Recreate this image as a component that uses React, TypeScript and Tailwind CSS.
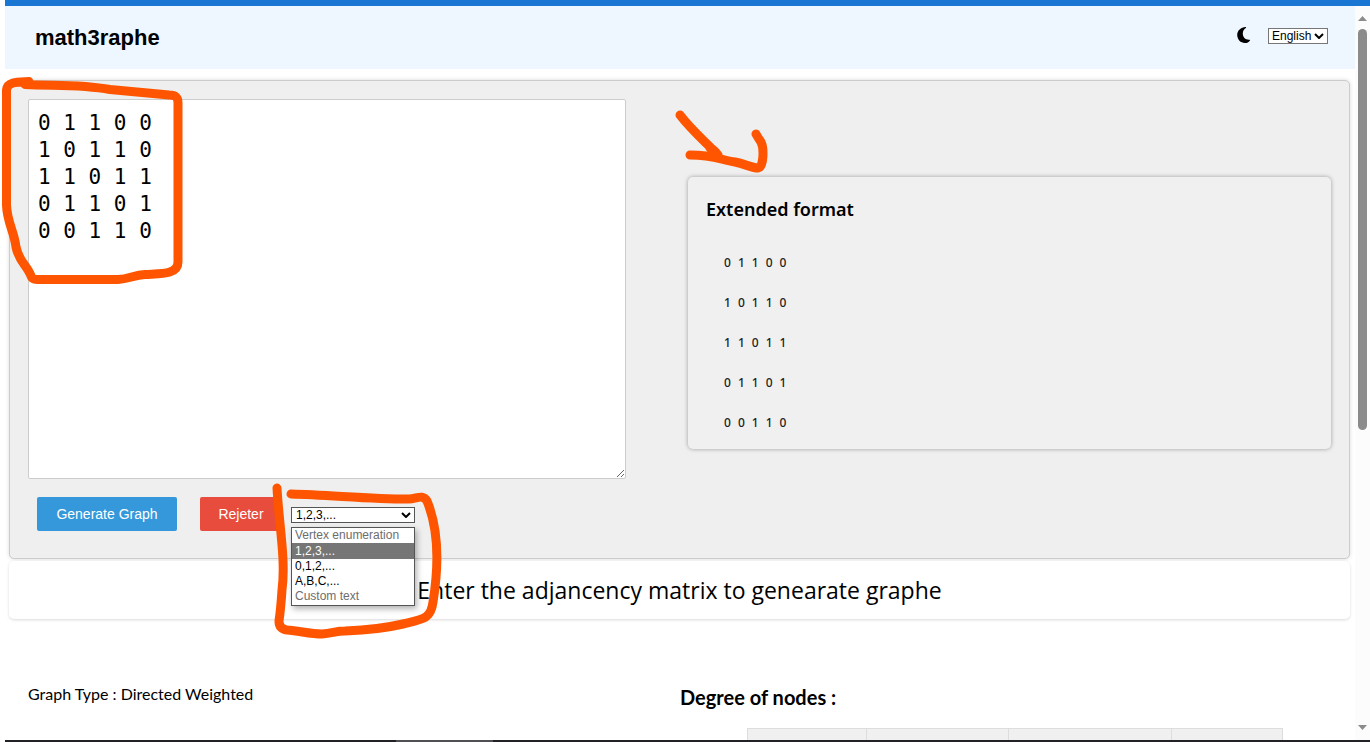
import { useState } from "react";

const MATRIX = ["0 1 1 0 0", "1 0 1 1 0", "1 1 0 1 1", "0 1 1 0 1", "0 0 1 1 0"];

const ENUMERATIONS = [
  { label: "Vertex enumeration", disabled: true },
  { label: "1,2,3,...", disabled: false },
  { label: "0,1,2,...", disabled: false },
  { label: "A,B,C,...", disabled: false },
  { label: "Custom text", disabled: true },
];

function Chevron() {
  return (
    <svg viewBox="0 0 10 6" className="pointer-events-none absolute right-1 top-[5px] h-[6px] w-[10px]" fill="none" stroke="#000" strokeWidth="2">
      <path d="M1 1l4 4 4-4" />
    </svg>
  );
}

function Header() {
  return (
    <header className="flex h-[63px] items-start justify-between bg-[#eef6ff] pl-[30px] pr-[27px]">
      <h1 className="mt-[18px] text-[22px] font-bold leading-7">math3raphe</h1>
      <div className="mt-[21px] flex items-start gap-4">
        <button type="button" aria-label="Dark mode" className="h-4 w-4">
          <svg viewBox="0 0 16 16" className="h-4 w-4">
            <path d="M9.600 0C4.900.2 1.200 3.600 1.200 8s3.500 8 7.600 8c2.300 0 4.200-.9 5.200-2.600.2-.4-.1-.7-.5-.6C9.600 13.200 6.800 10.300 6.800 6.600c0-2.300 1.200-4.400 3-5.500.6-.4.3-1.100-.2-1.100z" />
          </svg>
        </button>
        <div className="relative mt-px flex">
          <select aria-label="Language" className="h-4 w-[60px] appearance-none border border-[#767676] bg-white pl-[3px] text-xs leading-[14px]">
            <option>English</option>
          </select>
          <Chevron />
        </div>
      </div>
    </header>
  );
}

function EnumerationPicker() {
  const [selected, setSelected] = useState("1,2,3,...");
  return (
    <div className="relative w-[124px]">
      <div className="relative flex">
        <select
          aria-label="Vertex enumeration"
          value={selected}
          onChange={(e) => setSelected(e.target.value)}
          className="h-4 w-full appearance-none border border-[#555] bg-white pl-1 text-xs leading-[14px]"
        >
          {ENUMERATIONS.map((item) => (
            <option key={item.label} disabled={item.disabled}>{item.label}</option>
          ))}
        </select>
        <Chevron />
      </div>
      <ul role="listbox" aria-label="Vertex enumeration" className="absolute left-0 top-5 z-10 w-full border border-[#555] bg-white pb-px text-xs leading-[15px] shadow-[2px_3px_6px_rgba(0,0,0,0.3)]">
        {ENUMERATIONS.map((item) => (
          <li
            key={item.label}
            role="option"
            aria-selected={item.label === selected}
            onClick={() => !item.disabled && setSelected(item.label)}
            className={
              item.label === selected
                ? "bg-[#767676] pl-[3px] leading-4 text-white"
                : item.disabled
                  ? "pl-[3px] text-[#6d6d6d]"
                  : "pl-[3px] text-black"
            }
          >
            {item.label}
          </li>
        ))}
      </ul>
    </div>
  );
}

function Workspace() {
  return (
    <section className="ml-1 mr-[5px] mt-[11px] rounded-[5px] border border-[#ccc] bg-[#efefef] px-[18px] pb-[27px] pt-[18px] shadow-[0_0_4px_rgba(0,0,0,0.15)]">
      <div className="grid grid-cols-[598fr_643fr] items-start gap-[62px]">
        <div>
          <textarea
            aria-label="Adjacency matrix"
            defaultValue={MATRIX.join("\n")}
            className="block h-[380px] w-full rounded-[2px] border border-[#ccc] bg-white px-[9px] py-[10px] font-['DejaVu_Sans_Mono',monospace] text-[21px] leading-[27px] outline-none"
          />
          <div className="mt-[18px] flex pl-[9px] text-sm text-white">
            <button type="button" className="h-[34px] w-[140px] rounded-[2px] bg-[#3498db]">Generate Graph</button>
            <button type="button" className="ml-[23px] h-[34px] w-[82px] rounded-[2px] bg-[#e74c3c]">Rejeter</button>
            <div className="ml-[9px] mt-[10px] text-black">
              <EnumerationPicker />
            </div>
          </div>
        </div>
        <div className="mt-[78px] rounded-[5px] bg-[#f0f0f0] pb-[6px] pl-[18px] pt-[17px] shadow-[0_0_4px_rgba(0,0,0,0.35)]">
          <h2 className="font-['Noto_Sans',sans-serif] text-lg font-semibold leading-[30px]">Extended format</h2>
          <div className="mt-[19px] pl-[18px] font-['Noto_Sans',sans-serif] text-xs font-medium leading-10 text-[#222]">
            {MATRIX.map((row) => (
              <p key={row} className="flex gap-[7px]">
                {row.split(" ").map((value, i) => (
                  <span key={i}>{value}</span>
                ))}
              </p>
            ))}
          </div>
        </div>
      </div>
    </section>
  );
}

function Results() {
  return (
    <section className="mt-[61px] grid grid-cols-2 px-[23px]">
      <p className="pt-0.5 font-[Lato,sans-serif] text-base leading-6">Graph Type : Directed Weighted</p>
      <div>
        <h2 className="pt-[3px] font-[Lato,sans-serif] text-[20px] font-bold leading-[28px]">Degree of nodes :</h2>
        <table aria-label="Degree of nodes" className="ml-[67px] mt-[17px] w-[536px] table-fixed border-collapse">
          <colgroup>
            <col className="w-[119px]" />
            <col className="w-[142px]" />
            <col className="w-[163px]" />
            <col className="w-[111px]" />
          </colgroup>
          <tbody>
            <tr className="h-9 bg-[#f0f0f0]">
              <td className="border border-[#ddd]" />
              <td className="border border-[#ddd]" />
              <td className="border border-[#ddd]" />
              <td className="border border-[#ddd]" />
            </tr>
          </tbody>
        </table>
      </div>
    </section>
  );
}

function Scrollbar() {
  return (
    <div aria-hidden="true" className="flex w-[15px] shrink-0 flex-col items-center bg-[#fcfcfc] pb-[10px] pt-[10px]">
      <svg viewBox="0 0 9 5" className="h-[5px] w-[9px]" fill="#8b8b8b"><path d="M0 5L4.500 0 9 5z" /></svg>
      <div className="mt-2 h-[401px] w-[9px] rounded-full bg-[#8b8b8b]" />
      <svg viewBox="0 0 9 5" className="mt-auto h-[5px] w-[9px]" fill="#8b8b8b"><path d="M0 0L4.500 5 9 0z" /></svg>
    </div>
  );
}

function Annotations() {
  return (
    <svg
      aria-hidden="true"
      viewBox="0 0 1370 742"
      className="pointer-events-none absolute left-0 top-0 z-20 h-[742px] w-[1370px]"
      fill="none"
      stroke="#ff5500"
      strokeWidth="9"
      strokeLinecap="round"
      strokeLinejoin="round"
    >
      <path d="M29 81.500C20 82 7 81 6.500 90V205C7 222 14 231 16 247C19 262 27 265 31 276Q32 279.500 37 279.500H118C129 279 134 275 145 274.500C160 273.500 178 275 178 262V103C178 96 174 95 169 95L110 89.500C80 84 56 86 25 84.500" />
      <path d="M680 115C693 132 707 143 718 155Q714 149 710 148M690 155C714 155 721 160 735 162C745 164 752 168 758 168C764 167 764 148 761 142Q757 136 756 134" />
      <path d="M277 488C279 525 286 560 282 590C281 606 280 614 279 621Q279 629 287 630C300 631 310 634 322 634C333 633 336 631 345 631C368 630 386 628 403 624C423 619 431 619 433 602C439 565 439 530 427 501C422 493 416 500 407 499C370 499 330 495 291 494" />
    </svg>
  );
}

export default function App() {
  return (
    <div className="relative flex h-screen flex-col overflow-hidden bg-white pl-[5px] font-['Liberation_Sans',Arial,sans-serif] text-black">
      <div className="h-[6px] shrink-0 bg-[#1976d2]" />
      <div className="flex min-h-0 flex-1">
        <main className="min-w-0 flex-1 overflow-hidden">
          <Header />
          <Workspace />
          <p className="ml-1 mr-[5px] mt-0.5 rounded-[5px] bg-white text-center font-['Open_Sans',sans-serif] text-[23px] leading-[58px] shadow-[0_1px_3px_rgba(0,0,0,0.15)]">
            Enter the adjancency matrix to genearate graphe
          </p>
          <Results />
        </main>
        <Scrollbar />
      </div>
      <div className="flex h-0.5 shrink-0 bg-[#222226] pl-[391px]">
        <div className="w-[97px] bg-[#505054]" />
      </div>
      <Annotations />
    </div>
  );
}
